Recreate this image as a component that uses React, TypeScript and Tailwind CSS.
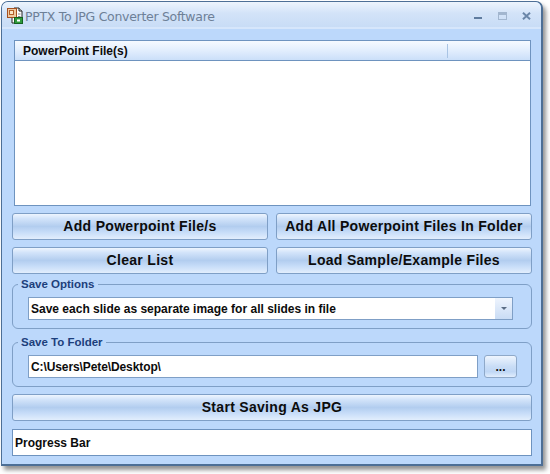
import React from "react";

const buttonClass =
  "h-[27px] rounded-[3px] border border-[#7f9fc6] bg-[linear-gradient(180deg,#eef5fe_0%,#d3e4fa_18%,#b2cdef_50%,#c6dcf8_72%,#e2eefd_100%)] font-bold text-[14px] tracking-[0.3px] text-[#0c0c0c] flex items-center justify-center";

function AppIcon() {
  return (
    <svg width="19" height="19" viewBox="0 0 19 19" className="shrink-0">
      <path d="M8 2h5l3 3v12H6V9z" fill="#fff" stroke="#222" strokeWidth="1" />
      <path d="M13 2v3h3" fill="#ddd" stroke="#222" strokeWidth="1" />
      <path d="M7.5 8.5h3M12 8h2.5M12 10.5h2.5" stroke="#888" strokeWidth="1" />
      <rect x="1.5" y="2.5" width="9" height="9" fill="#f0c9a0" stroke="#a5501f" />
      <rect x="3.5" y="4.5" width="4" height="4" fill="#fbe6c9" stroke="#b4602a" />
      <rect x="8.5" y="11.5" width="8" height="6" fill="#2f9a3c" stroke="#15621f" />
      <rect x="11" y="13.5" width="3" height="2" fill="#fff" />
    </svg>
  );
}

function GroupBox({ title, children }: { title: string; children: React.ReactNode }) {
  return (
    <fieldset className="h-[51px] rounded-[6px] border border-[#7f9fc6] pl-[15px] pr-[14px] min-w-0">
      <legend className="-ml-[10px] px-[3px] font-bold text-[11.5px] leading-[13px] text-[#1c3f7c]">{title}</legend>
      {children}
    </fieldset>
  );
}

export default function App() {
  return (
    <div className="w-[550px] h-[474px] bg-white pt-px pl-px font-['Liberation_Sans',sans-serif]">
      <div className="w-[542px] h-[465px] rounded-t-[7px] border border-[#4d6f96] border-b-2 border-r-2 bg-[#bcd8fb] shadow-[3px_4px_4px_rgba(60,60,60,0.55)] flex flex-col">
        <div className="h-[27px] shrink-0 rounded-t-[6px] border-b-2 border-[#d6e6fb] bg-[linear-gradient(180deg,#edf4fd_0%,#d3e3f8_45%,#c8dcf6_100%)] flex items-center pt-[2px] pl-[4px] pr-[10px]">
          <AppIcon />
          <span className="mt-[3px] font-['DejaVu_Sans',sans-serif] text-[12.5px] tracking-[-0.3px] text-[#6d8097]">
            PPTX To JPG Converter Software
          </span>
          <div className="ml-auto flex items-center gap-[16px]">
            <span className="w-[8px] h-[2px] mt-[5px] bg-[#5f7c9f]" />
            <span className="w-[9px] h-[8px] border border-[#a2b6cf] border-t-[3px]" />
            <svg width="9" height="8" viewBox="0 0 10 9" className="-ml-px">
              <path d="M1 .8 9 8.2M9 .8 1 8.2" stroke="#6a86a8" strokeWidth="2.2" />
            </svg>
          </div>
        </div>

        <div className="flex-1 pt-[11px] pl-[10px] pr-[9px] flex flex-col">
          <div className="ml-[2px] mr-px h-[166px] border border-[#6e93bf] bg-white flex flex-col">
            <div className="h-[20px] shrink-0 border-b border-[#6e93bf] bg-[linear-gradient(180deg,#f6faff_0%,#e2eefd_50%,#cbdff9_100%)] flex items-center pl-[8px] relative">
              <span className="font-bold text-[12px] text-[#0c0c0c]">PowerPoint File(s)</span>
              <span className="absolute right-[82px] top-[3px] h-[14px] w-px bg-[#a9c4e4]" />
            </div>
          </div>

          <div className="mt-[7px] grid grid-cols-2 gap-x-[8px] gap-y-[7px]">
            <button className={buttonClass}>Add Powerpoint File/s</button>
            <button className={buttonClass}>Add All Powerpoint Files In Folder</button>
            <button className={buttonClass}>Clear List</button>
            <button className={buttonClass}>Load Sample/Example Files</button>
          </div>

          <div className="mt-[4px]">
            <GroupBox title="Save Options">
              <div className="mt-[6px] mr-[4px] h-[23px] border border-[#7f9fc6] bg-white flex items-center pl-[2px]">
                <span className="font-bold text-[12px] text-[#0c0c0c]">
                  Save each slide as separate image for all slides in file
                </span>
                <span className="ml-auto w-[17px] h-full bg-[linear-gradient(180deg,#eef4fd,#c9dcf5)] flex items-center justify-center">
                  <span className="w-0 h-0 border-x-[3px] border-t-[3px] border-x-transparent border-t-[#5b6d85]" />
                </span>
              </div>
            </GroupBox>
          </div>

          <div className="mt-[7px]">
            <GroupBox title="Save To Folder">
              <div className="mt-[6px] flex gap-[6px]">
                <div className="flex-1 h-[23px] border border-[#7f9fc6] bg-white flex items-center pl-[2px] font-bold text-[12px] tracking-[-0.1px] text-[#0c0c0c]">
                  C:\Users\Pete\Desktop\
                </div>
                <button className="w-[33px] h-[23px] rounded-[3px] border border-[#8fa9c9] bg-[linear-gradient(180deg,#eef5fe_0%,#c9ddf6_50%,#c0d7f5_75%,#e2eefd_100%)] font-bold text-[12px] leading-[23px] text-[#0c0c0c]">
                  ...
                </button>
              </div>
            </GroupBox>
          </div>

          <button className={`${buttonClass} mt-[7px]`}>Start Saving As JPG</button>
          <div className="mt-[8px] h-[27px] border border-[#6e93bf] bg-white flex items-center pl-[2px] font-bold text-[12px] text-[#0c0c0c]">
            Progress Bar
          </div>
        </div>
      </div>
    </div>
  );
}
